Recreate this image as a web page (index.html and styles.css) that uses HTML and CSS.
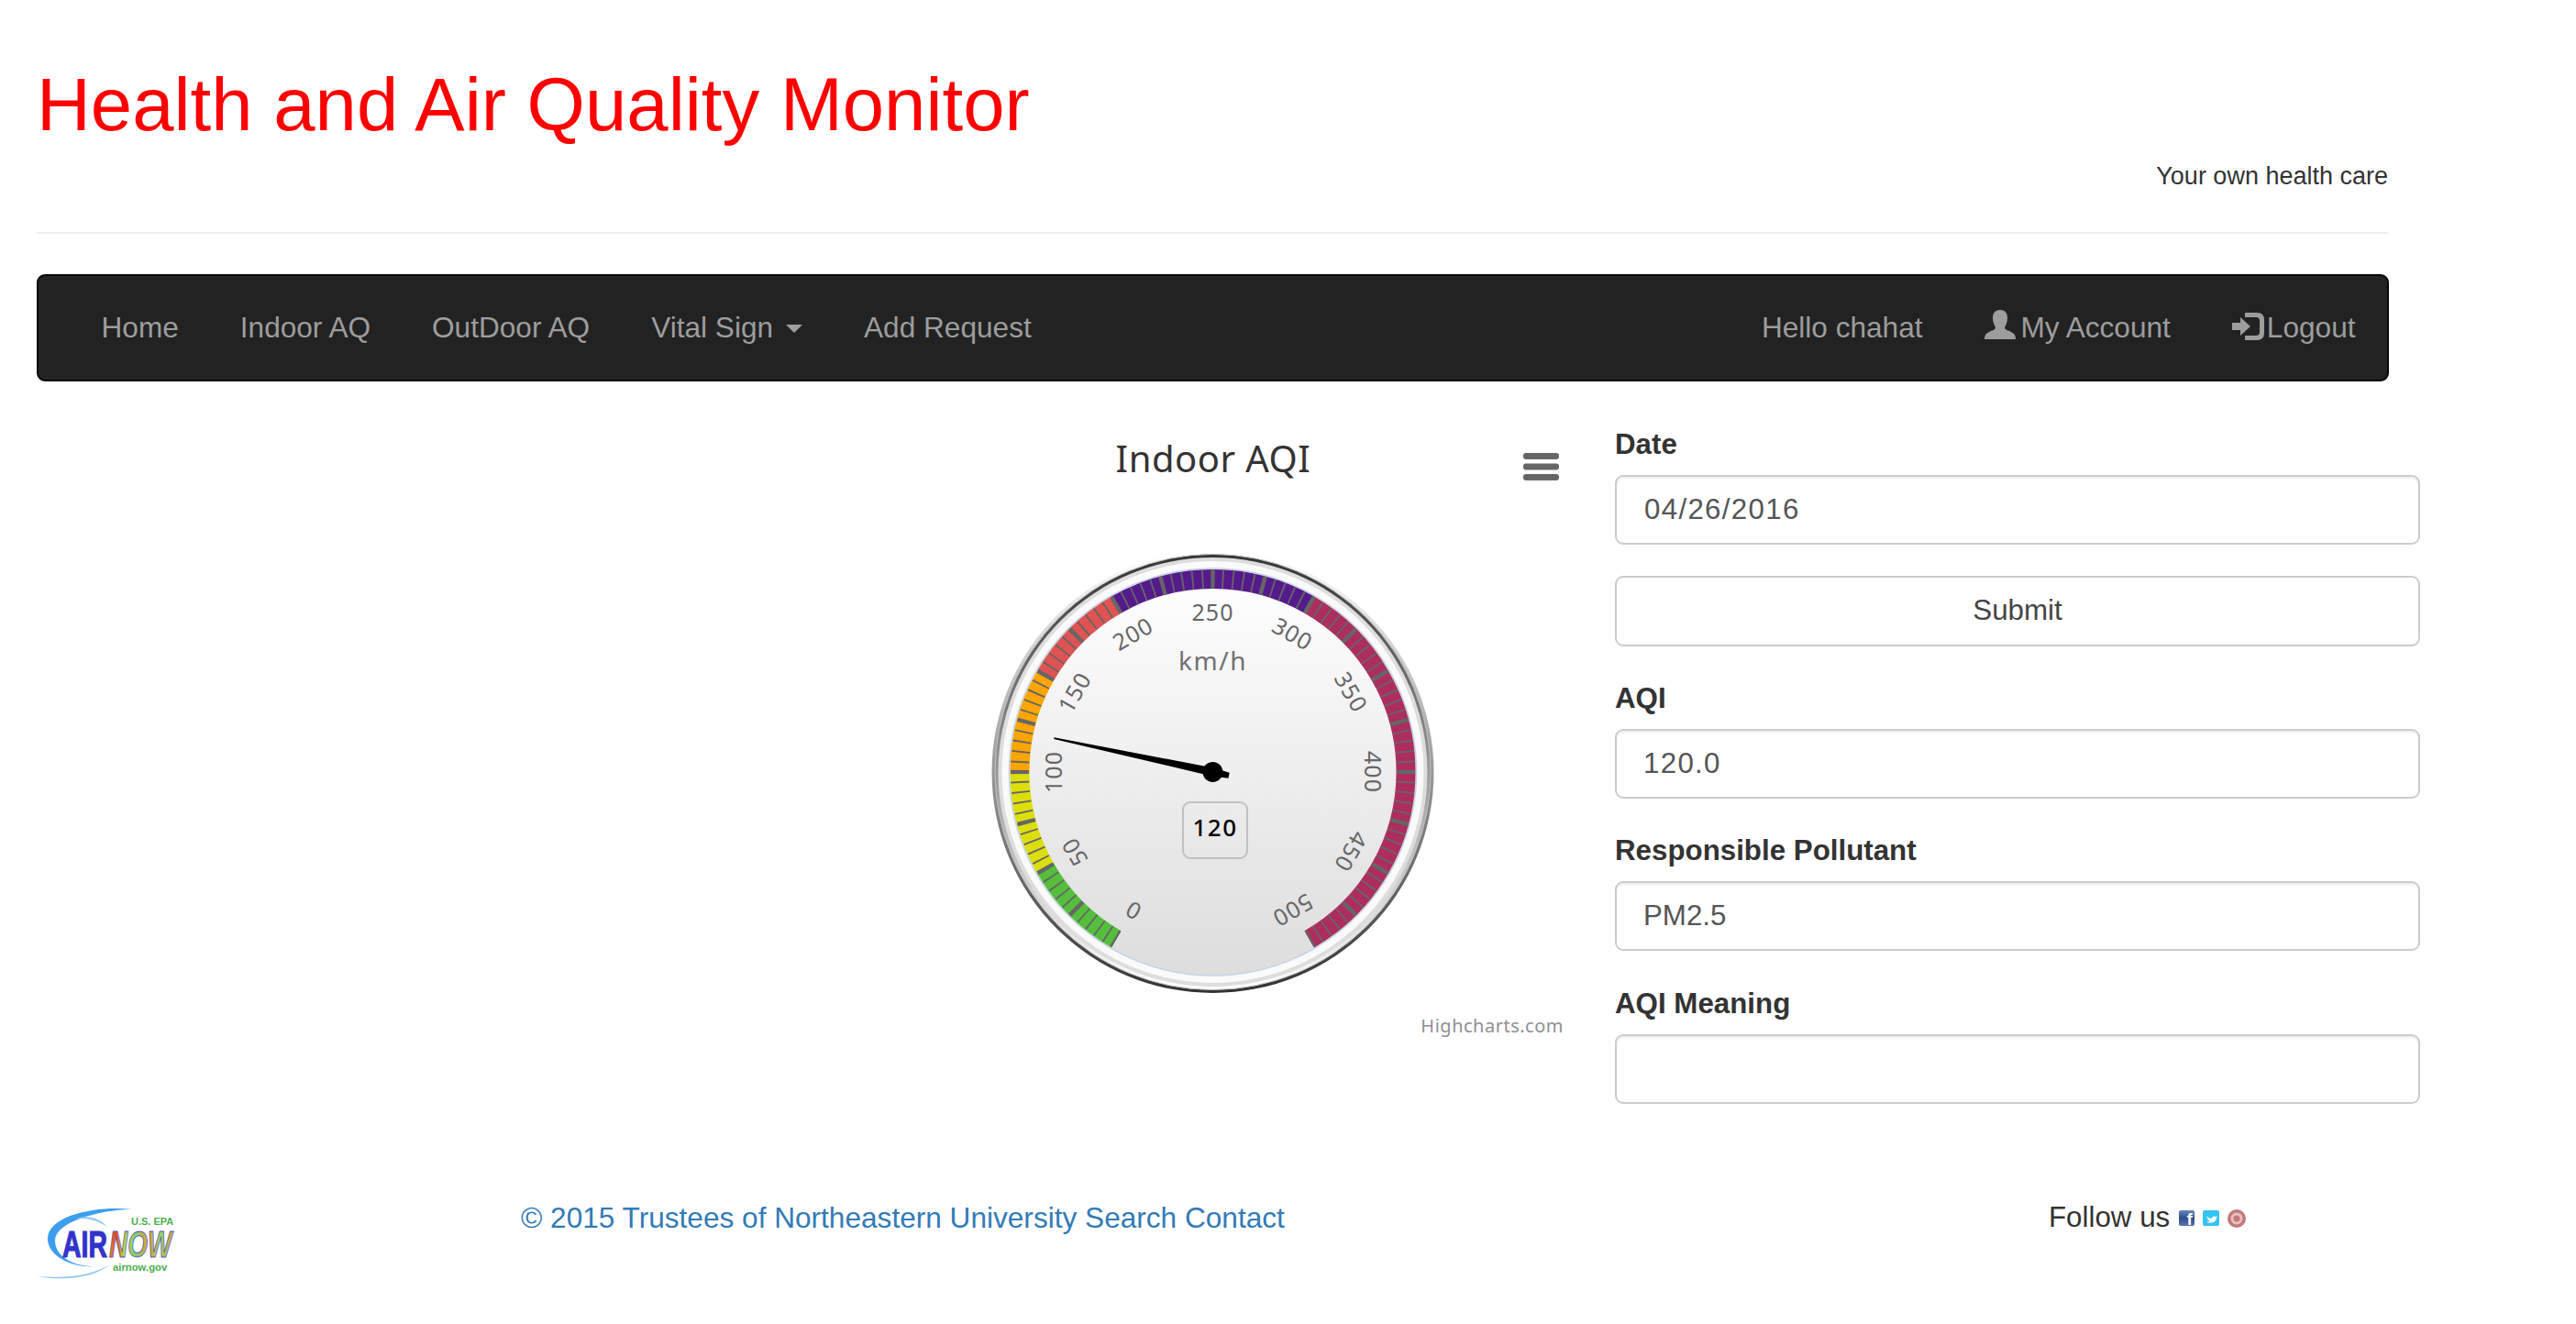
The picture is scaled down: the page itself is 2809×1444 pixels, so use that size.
FILE: index.html
```html
<!DOCTYPE html>
<html lang="en">
<head>
<meta charset="utf-8">
<title>Health and Air Quality Monitor</title>
<link rel="stylesheet" href="styles.css">
</head>
<body>
<div class="shell">
  <header class="masthead">
    <h1 class="brand">Health and Air Quality Monitor</h1>
    <p class="tagline">Your own health care</p>
    <hr class="rule">
  </header>

  <nav class="navbar">
    <ul class="nav-list">
      <li><a href="#">Home</a></li>
      <li><a href="#">Indoor AQ</a></li>
      <li><a href="#">OutDoor AQ</a></li>
      <li><a href="#">Vital Sign<span class="caret"></span></a></li>
      <li><a href="#">Add Request</a></li>
    </ul>
    <ul class="nav-list">
      <li><a href="#">Hello chahat</a></li>
      <li><a href="#">
        <svg class="nav-icon icon-user" viewBox="0 0 34 32"><path d="M17 0C11 0 9 4 9 9C9 14 11 17 12 19C12 21 10 22 7 23C3 25 0 26 0 32H34C34 26 31 25 27 23C24 22 22 21 22 19C23 17 25 14 25 9C25 4 23 0 17 0Z"/></svg>My Account</a></li>
      <li><a href="#">
        <svg class="nav-icon icon-login" viewBox="0 0 35 30"><path d="M14 0H27Q35 0 35 8V22Q35 30 27 30H14V25H26Q30 25 30 21V9Q30 5 26 5H14Z"/><path d="M0 11H9V5L20 15L9 25V19H0Z"/></svg>Logout</a></li>
    </ul>
  </nav>

  <main class="content">
    <div class="chart">
      <svg class="gauge" viewBox="0 0 768 700" width="768" height="700">
        <defs>
          <linearGradient id="bezelOuter" x1="0" y1="0" x2="0" y2="1"><stop offset="0" stop-color="#fff"/><stop offset="1" stop-color="#333"/></linearGradient>
          <linearGradient id="bezelInner" x1="0" y1="0" x2="0" y2="1"><stop offset="0" stop-color="#333"/><stop offset="1" stop-color="#fff"/></linearGradient>
          <linearGradient id="dial" x1="0" y1="0" x2="0" y2="1"><stop offset="0" stop-color="#fff"/><stop offset="1" stop-color="#ddd"/></linearGradient>
        </defs>
        <text class="chart-title" x="384" y="55">Indoor AQI</text>
        <g class="menu-icon">
          <rect x="722" y="34" width="39" height="7" rx="3"/>
          <rect x="722" y="45.500" width="39" height="7" rx="3"/>
          <rect x="722" y="57" width="39" height="7" rx="3"/>
        </g>
        <g transform="translate(383.5 382)">
          <circle r="241" fill="url(#bezelOuter)"/>
          <circle class="bezel-line" r="237.500" fill="url(#bezelInner)"/>
          <circle r="234" fill="#ddd"/>
          <circle r="230" fill="#fafafa"/>
          <circle class="dial" r="222" fill="url(#dial)"/>

          <path class="band band-green" d="M-105.25 182.31A210.5 210.5 0 0 1 -182.3 105.25"/>
          <path class="band band-yellow" d="M-182.3 105.25A210.5 210.5 0 0 1 -210.5 0"/>
          <path class="band band-orange" d="M-210.5 0A210.5 210.5 0 0 1 -182.3 -105.25"/>
          <path class="band band-red" d="M-182.3 -105.25A210.5 210.5 0 0 1 -105.25 -182.31"/>
          <path class="band band-purple" d="M-105.25 -182.31A210.5 210.5 0 0 1 105.25 -182.31"/>
          <path class="band band-crimson" d="M105.25 -182.31A210.5 210.5 0 0 1 105.25 182.31"/>
          <path class="ticks-minor" pathLength="300" d="M-105.25 182.31A210.5 210.5 0 1 1 105.25 182.31"/>
          <path class="ticks-major" pathLength="300" d="M-105.25 182.31A210.5 210.5 0 1 1 105.25 182.31"/>

          <g class="scale">
            <text transform="rotate(-150) translate(0 -175)">0</text>
            <text transform="rotate(-120) translate(0 -175)">50</text>
            <text transform="rotate(-90) translate(0 -175)">100</text>
            <text transform="rotate(-60) translate(0 -175)">150</text>
            <text transform="rotate(-30) translate(0 -175)">200</text>
            <text transform="translate(0 -175)">250</text>
            <text transform="rotate(30) translate(0 -175)">300</text>
            <text transform="rotate(60) translate(0 -175)">350</text>
            <text transform="rotate(90) translate(0 -175)">400</text>
            <text transform="rotate(120) translate(0 -175)">450</text>
            <text transform="rotate(150) translate(0 -175)">500</text>
          </g>
          <text class="unit" x="0" y="-122">km/h</text>

          <g class="needle" transform="rotate(-78)">
            <polygon points="-0.9,-177 0.9,-177 4.5,0 3,18 -3,18 -4.5,0"/>
            <circle r="11"/>
          </g>

          <rect class="value-box" x="-32.500" y="33" width="70" height="61" rx="8"/>
          <text class="value" x="2.500" y="60">120</text>
        </g>
        <text class="credit" x="766" y="658">Highcharts.com</text>
      </svg>
    </div>

    <form class="panel">
      <div class="field">
        <label class="field-label" for="date">Date</label>
        <input class="control control-digits" id="date" type="text" value="04/26/2016">
      </div>
      <button class="submit" type="button">Submit</button>
      <div class="field">
        <label class="field-label" for="aqi">AQI</label>
        <input class="control control-digits control-value" id="aqi" type="text" value="120.0">
      </div>
      <div class="field">
        <label class="field-label" for="pollutant">Responsible Pollutant</label>
        <input class="control" id="pollutant" type="text" value="PM2.5">
      </div>
      <div class="field">
        <label class="field-label" for="meaning">AQI Meaning</label>
        <input class="control" id="meaning" type="text" value="">
      </div>
    </form>
  </main>

  <footer class="footer">
    <svg class="airnow" viewBox="0 0 155 85" width="155" height="85">
      <defs>
        <linearGradient id="nowFill" x1="0" y1="0" x2="1" y2="0">
          <stop offset="0" stop-color="#e8a020"/>
          <stop offset="0.1" stop-color="#e83a1a"/>
          <stop offset="0.22" stop-color="#b8d83a"/>
          <stop offset="0.4" stop-color="#7fd46a"/>
          <stop offset="0.6" stop-color="#e0a030"/>
          <stop offset="0.78" stop-color="#8ed860"/>
          <stop offset="1" stop-color="#e2a028"/>
        </linearGradient>
      </defs>
      <path class="swoosh-a" d="M107 5.700C70 2 16 12 16 38C16 58 45 70 66 68C45 68 24 58 24 40C24 20 70 7 107 5.700Z"/>
      <path class="swoosh-b" d="M46 16C60 12 72 15 81 25C70 18 58 15 46 16Z"/>
      <path class="swoosh-b" d="M4 78.700C35 82 65 78 84 66C65 82 30 84 4 78.700Z"/>
      <text class="logo-epa" x="107" y="23">U.S. EPA</text>
      <text class="logo-air" transform="translate(32 58) scale(0.71 1)">AIR</text>
      <text class="logo-now" transform="translate(83 58) scale(0.7 1)" fill="url(#nowFill)">NOW</text>
      <text class="logo-gov" x="87" y="73">airnow.gov</text>
    </svg>
    <p class="footer-links"><a href="#">© 2015 Trustees of Northeastern University</a> <a href="#">Search</a> <a href="#">Contact</a></p>
    <div class="follow">
      <span>Follow us</span>
      <svg class="social" viewBox="0 0 74 20" width="74" height="20">
        <defs>
          <linearGradient id="fbFill" x1="0" y1="0" x2="0" y2="1"><stop offset="0" stop-color="#6a86bc"/><stop offset="0.5" stop-color="#2f4d8c"/><stop offset="1" stop-color="#5a76ac"/></linearGradient>
        </defs>
        <rect x="0" y="1" width="17" height="17" rx="2" fill="url(#fbFill)"/>
        <text class="fb-f" x="8.500" y="17">f</text>
        <rect x="26" y="1" width="18" height="17" rx="2" class="tw-bg"/>
        <path class="tw-bird" d="M30 7C32 9 34 10 36 10C36 8 38 6.500 40 8L42 7.500L41 9C41 13 37 15 33 14.500C32 14.500 31 14 30 13.500C32 13.500 33 13 34 12.500C32 12 31 11 31 10L32 10C31 9 30 8 30 7Z"/>
        <circle class="seal-a" cx="63" cy="10" r="10"/>
        <circle class="seal-b" cx="63" cy="10" r="6.500"/>
        <circle class="seal-a" cx="63" cy="10" r="3.500"/>
      </svg>
    </div>
  </footer>
</div>
</body>
</html>
```
FILE: styles.css
```css
* { box-sizing: border-box; }

html, body { background: #fff; }

body {
  margin: 0;
  color: #333;
  font-family: "Liberation Sans", Arial, sans-serif;
  font-size: 31.3px;
}

.shell { width: 2809px; }

.masthead {
  width: 2564px;
  margin-left: 40px;
  padding-top: 70px;
}

.brand {
  margin: 0;
  color: #f00;
  font-size: 81.5px;
  font-weight: 400;
  line-height: 88px;
}

.tagline {
  margin: 14px 0 0;
  font-size: 27px;
  line-height: 40px;
  text-align: right;
}

.rule {
  margin: 41px 0 0;
  height: 2px;
  border: 0;
  background: #eee;
}

.navbar {
  display: flex;
  justify-content: space-between;
  width: 2565px;
  height: 117px;
  margin: 44px 0 0 40px;
  padding: 0 1px 0 35px;
  background: #222;
  border: 2px solid #080808;
  border-radius: 9px;
  font-size: 31.600px;
}

.nav-list {
  display: flex;
  margin: 0;
  padding: 0;
  list-style: none;
}

.nav-list a {
  display: flex;
  align-items: center;
  height: 113px;
  padding: 0 33.500px;
  color: #9d9d9d;
  text-decoration: none;
  white-space: nowrap;
}

.caret {
  width: 0;
  height: 0;
  margin-left: 14px;
  margin-top: 2px;
  border-top: 9px solid #9d9d9d;
  border-left: 9px solid transparent;
  border-right: 9px solid transparent;
}

.nav-icon {
  margin-right: 6px;
  fill: #9d9d9d;
}

.icon-user { width: 34px; height: 32px; margin-top: -8px; }
.icon-login { width: 35px; height: 30px; margin-top: -4px; margin-right: 3px; }

.content {
  display: flex;
  align-items: flex-start;
  gap: 54px;
  margin: 44px 0 0 939px;
}

.chart { width: 768px; height: 700px; flex: none; }

.gauge { display: block; overflow: visible; }

.gauge text { font-family: "Noto Sans", "Open Sans", sans-serif; text-anchor: middle; dominant-baseline: central; }

.gauge .chart-title { font-size: 40px; fill: #333; dominant-baseline: alphabetic; letter-spacing: 0.5px; }

.menu-icon { fill: #666; }

.bezel-line { stroke: #c0c0c0; stroke-width: 1; }

.dial { stroke: #c3d2e6; stroke-width: 1.500; }

.band { fill: none; stroke-width: 21; }
.band-green { stroke: #55bf3b; }
.band-yellow { stroke: #dddf0d; }
.band-orange { stroke: #ffa500; }
.band-red { stroke: #df5353; }
.band-purple { stroke: #551a8b; }
.band-crimson { stroke: #ae2d5f; }

.ticks-minor, .ticks-major { fill: none; stroke: #666; stroke-width: 20; }
.ticks-minor { stroke-dasharray: 0.5 2.5; stroke-dashoffset: 0.25; }
.ticks-major { stroke-dasharray: 1.2 13.8; stroke-dashoffset: 0.6; }

.gauge .scale text { font-size: 25px; fill: #666; letter-spacing: 1px; }
.gauge .unit { font-size: 28px; fill: #707070; letter-spacing: 1.500px; }

.needle { fill: #000; }

.value-box { fill: none; stroke: #c0c0c0; stroke-width: 2; }

.gauge .value { font-size: 26px; fill: #000; font-weight: 500; letter-spacing: 1.500px; }

.gauge .credit { font-size: 20px; fill: #909090; text-anchor: end; letter-spacing: 0.5px; }

.panel { width: 878px; flex: none; padding-top: 2px; }

.field { margin-bottom: 34.600px; }

.field-label {
  display: block;
  margin-bottom: 11px;
  padding-top: 1px;
  font-weight: 700;
  line-height: 44px;
}

.control {
  display: block;
  width: 100%;
  height: 76px;
  padding: 0 29px;
  color: #555;
  background: #fff;
  border: 2px solid #ccc;
  border-radius: 9px;
  box-shadow: inset 0 2px 2px rgba(0, 0, 0, 0.075);
  font: inherit;
}

.control-digits { letter-spacing: 1.300px; padding-left: 30px; }
.control-value { padding-left: 29px; }

.submit {
  display: block;
  width: 100%;
  height: 77px;
  margin: -1px 0 34px;
  color: #444;
  background: #fff;
  border: 2px solid #ccc;
  border-radius: 9px;
  font: inherit;
}

.footer {
  display: grid;
  grid-template-columns: 532px 1666px auto;
  align-items: start;
  margin-top: 68px;
  padding-left: 36px;
}

.airnow { display: block; margin-top: 7px; }

.swoosh-a { fill: #3d9eee; }
.swoosh-b { fill: #8fc8f8; }

.airnow text { font-family: "Liberation Sans", Arial, sans-serif; font-weight: 700; }

.logo-epa { font-size: 11px; fill: #4caf50; }
.logo-gov { font-size: 11.300px; fill: #4caf50; }
.logo-air { font-size: 40px; fill: #3333cc; stroke: #3333cc; stroke-width: 1.200; }
.logo-now { font-size: 40px; font-style: italic; stroke: #5a50c8; stroke-width: 1; }

.footer-links {
  margin: 0;
  font-size: 31.600px;
  line-height: 44px;
  white-space: nowrap;
}

.footer-links a { color: #337ab7; text-decoration: none; }

.follow {
  display: flex;
  align-items: center;
  gap: 10px;
  height: 44px;
  white-space: nowrap;
}

.social { display: block; margin-top: 2px; }

.fb-f { font-family: "Liberation Sans", sans-serif; font-weight: 700; font-size: 19px; fill: #fff; }
.tw-bg { fill: #33c3f5; }
.tw-bird { fill: #fff; }
.seal-a { fill: #c47878; }
.seal-b { fill: #e6c0c0; }
```
